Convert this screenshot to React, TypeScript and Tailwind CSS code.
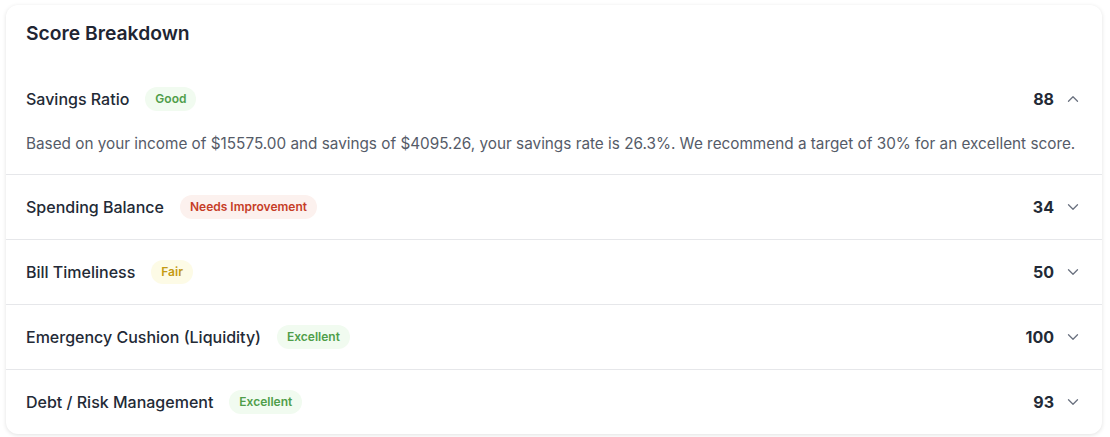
import React, { useState } from 'react';
import { ChevronDown, ChevronUp } from 'lucide-react';

type Rating = 'Good' | 'Needs Improvement' | 'Fair' | 'Excellent';

interface Item {
  name: string;
  rating: Rating;
  score: number;
  detail: string;
}

const items: Item[] = [
  {
    name: 'Savings Ratio',
    rating: 'Good',
    score: 88,
    detail:
      'Based on your income of $15575.00 and savings of $4095.26, your savings rate is 26.3%. We recommend a target of 30% for an excellent score.',
  },
  { name: 'Spending Balance', rating: 'Needs Improvement', score: 34, detail: '' },
  { name: 'Bill Timeliness', rating: 'Fair', score: 50, detail: '' },
  { name: 'Emergency Cushion (Liquidity)', rating: 'Excellent', score: 100, detail: '' },
  { name: 'Debt / Risk Management', rating: 'Excellent', score: 93, detail: '' },
];

const badgeStyles: Record<Rating, string> = {
  Good: 'bg-[#f1fbf0] text-[#4f9e4a]',
  Excellent: 'bg-[#f1fbf0] text-[#4f9e4a]',
  Fair: 'bg-[#fdfbe6] text-[#c49a14]',
  'Needs Improvement': 'bg-[#fcf1ee] text-[#c63d27]',
};

export default function App() {
  const [open, setOpen] = useState<number | null>(0);

  return (
    <div className="min-h-[437px] bg-white pt-[5px] pl-[6px] font-['Inter',sans-serif]">
      <div className="w-[1096px] rounded-xl bg-white shadow-[0_1px_4px_rgba(0,0,0,0.12)]">
        <h2 className="px-5 pt-[14px] pb-[20px] text-[19.3px] leading-7 font-semibold text-[#1f2533]">
          Score Breakdown
        </h2>

        <div>
          {items.map((item, idx) => {
            const isOpen = open === idx;
            return (
              <div key={item.name} className={idx > 0 ? 'border-t border-[#e6e7ea]' : ''}>
                <button
                  onClick={() => setOpen(isOpen ? null : idx)}
                  className="flex w-full items-center justify-between px-5 py-5 text-left"
                >
                  <div className="flex h-6 items-center gap-4">
                    <span className="text-[16px] leading-5 font-medium text-[#232a36]">{item.name}</span>
                    <span
                      className={`rounded-full px-2.5 py-[5px] text-[12px] leading-[14px] font-semibold ${badgeStyles[item.rating]}`}
                    >
                      {item.rating}
                    </span>
                  </div>
                  <div className="flex items-center gap-2.5">
                    <span className="text-[16px] leading-5 font-bold text-[#232a36]">{item.score}</span>
                    {isOpen ? (
                      <ChevronUp size={18} strokeWidth={1.75} className="text-[#6b7280]" />
                    ) : (
                      <ChevronDown size={18} strokeWidth={1.75} className="text-[#6b7280]" />
                    )}
                  </div>
                </button>
                {isOpen && item.detail && (
                  <p className="px-5 pt-[3px] pb-[20px] text-[15.3px] leading-5 text-[#555b68]">{item.detail}</p>
                )}
              </div>
            );
          })}
        </div>
      </div>
    </div>
  );
}
